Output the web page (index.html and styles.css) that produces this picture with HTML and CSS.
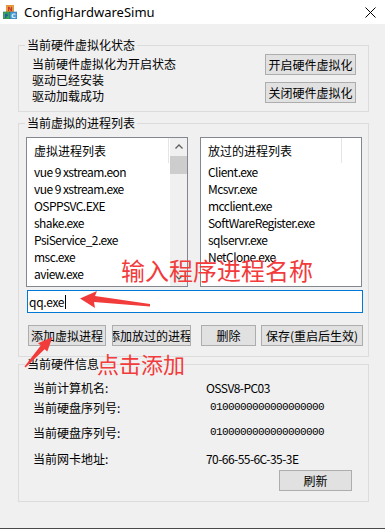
FILE: index.html
```html
<!DOCTYPE html>
<html lang="zh-CN">
<head>
<meta charset="utf-8">
<title>ConfigHardwareSimu</title>
<link rel="stylesheet" href="styles.css">
</head>
<body>
<div class="window">
  <div class="titlebar">
    <svg class="app-icon" viewBox="0 0 14 14" width="14" height="14">
      <rect x="3.5" y="0" width="7" height="7" fill="#f2a23a" stroke="#c77a1e" stroke-width="0.6"/>
      <text x="7" y="6" font-size="6" text-anchor="middle" fill="#c0282a" font-family="DejaVu Sans" font-weight="bold">N</text>
      <rect x="0" y="7" width="7" height="7" fill="#3fa65a" stroke="#2a7a40" stroke-width="0.6"/>
      <text x="3.5" y="13" font-size="6" text-anchor="middle" fill="#1d4fb0" font-family="DejaVu Sans" font-weight="bold">F</text>
      <rect x="7" y="7" width="7" height="7" fill="#4f9fd8" stroke="#2a6ea8" stroke-width="0.6"/>
      <text x="10.5" y="13" font-size="6" text-anchor="middle" fill="#e8f4ff" font-family="DejaVu Sans" font-weight="bold">C</text>
    </svg>
    <span class="title">ConfigHardwareSimu</span>
    <svg class="close" viewBox="0 0 11 11" width="11" height="11">
      <path d="M0.5 0.5 L10.5 10.5 M10.5 0.5 L0.5 10.5" stroke="#000" stroke-width="1"/>
    </svg>
  </div>

  <div class="group g1">
    <div class="gtitle">当前硬件虚拟化状态</div>
    <div class="status-row">
      <div class="status-text">
        <div class="line l1">当前硬件虚拟化为开启状态</div>
        <div class="line">驱动已经安装</div>
        <div class="line">驱动加载成功</div>
      </div>
      <div class="btn-col">
        <button class="btn btn-wide">开启硬件虚拟化</button>
        <button class="btn btn-wide">关闭硬件虚拟化</button>
      </div>
    </div>
  </div>

  <div class="group g2">
    <div class="gtitle">当前虚拟的进程列表</div>
    <div class="lists">
      <div class="list">
        <div class="list-main">
          <div class="list-head">虚拟进程列表</div>
          <div class="item">vue 9 xstream.eon</div>
          <div class="item">vue 9 xstream.exe</div>
          <div class="item">OSPPSVC.EXE</div>
          <div class="item">shake.exe</div>
          <div class="item">PsiService_2.exe</div>
          <div class="item">msc.exe</div>
          <div class="item">aview.exe</div>
        </div>
        <div class="scrollbar">
          <div class="sb-btn">
            <svg width="8" height="5" viewBox="0 0 8 5"><path d="M0.5 4.5 L4 1 L7.5 4.5" fill="none" stroke="#606060" stroke-width="1.3"/></svg>
          </div>
          <div class="sb-thumb"></div>
          <div class="sb-track"></div>
          <div class="sb-btn">
            <svg width="8" height="5" viewBox="0 0 8 5"><path d="M0.5 0.5 L4 4 L7.5 0.5" fill="none" stroke="#606060" stroke-width="1.3"/></svg>
          </div>
        </div>
      </div>
      <div class="list">
        <div class="list-main">
          <div class="list-head head-right">放过的进程列表</div>
          <div class="item">Client.exe</div>
          <div class="item">Mcsvr.exe</div>
          <div class="item">mcclient.exe</div>
          <div class="item">SoftWareRegister.exe</div>
          <div class="item">sqlservr.exe</div>
          <div class="item">NetClone.exe</div>
        </div>
      </div>
    </div>
    <div class="input"><span class="latin">qq.exe</span><span class="caret"></span></div>
    <div class="actions">
      <button class="btn b-add">添加虚拟进程</button>
      <button class="btn b-pass"><span class="clip">添加放过的进程</span></button>
      <button class="btn b-del">删除</button>
      <button class="btn b-save">保存(重启后生效)</button>
    </div>
  </div>

  <div class="group g3">
    <div class="gtitle">当前硬件信息</div>
    <div class="info">
      <div class="info-row r1"><span class="info-label">当前计算机名:</span><span class="val">OSSV8-PC03</span></div>
      <div class="info-row r2"><span class="info-label">当前硬盘序列号:</span><span class="val mono">0100000000000000000</span></div>
      <div class="info-row r3"><span class="info-label">当前硬盘序列号:</span><span class="val mono">0100000000000000000</span></div>
      <div class="info-row r4"><span class="info-label">当前网卡地址:</span><span class="val">70-66-55-6C-35-3E</span></div>
      <button class="btn refresh">刷新</button>
    </div>
  </div>

  <div class="taskbar"></div>

  <svg class="annot" viewBox="0 0 385 529" width="385" height="529">
    <polygon points="80,298.5 97,291 95,296 150,304 150,306.5 94,302 95,308" fill="#f23b3b"/>
    <polygon points="52.5,337 47.3,351.5 44.6,349.2 25.5,367.5 24.5,366.6 40.8,345.6 38,343.3" fill="#f23b3b"/>
  </svg>
  <div class="note note1">输入程序进程名称</div>
  <div class="note note2">点击添加</div>
</div>
</body>
</html>
```

FILE: styles.css
```css
* { box-sizing: border-box; }

body {
  margin: 0;
  background: #f0f0f0;
  font-family: "Noto Sans CJK SC", "Noto Sans", sans-serif;
  font-size: 12px;
  color: #000;
}

.window {
  position: relative;
  width: 385px;
  height: 529px;
  overflow: hidden;
  display: flex;
  flex-direction: column;
}

.titlebar {
  height: 24px;
  flex-shrink: 0;
  background: #fff;
  display: flex;
  align-items: center;
}

.app-icon {
  margin-left: 3px;
  margin-right: 7px;
}

.title {
  font-family: "Noto Sans", sans-serif;
  font-size: 13px;
  line-height: 16px;
}

.close {
  margin-left: auto;
  margin-right: 9px;
}

.group {
  border: 1px solid #dcdcdc;
  margin: 0 16px 0 18px;
  display: flex;
  flex-direction: column;
  flex-shrink: 0;
}

.g1 { margin-top: 21px; }
.g2 { margin-top: 11px; }
.g3 { margin-top: 7px; }

.gtitle {
  align-self: flex-start;
  margin: -8px 0 0 6px;
  padding: 0 2px;
  line-height: 14px;
  background: #f0f0f0;
  white-space: nowrap;
}

.status-row {
  display: flex;
  justify-content: space-between;
  padding: 2px 12px 7px 13px;
}

.status-text { padding-top: 1px; }

.line {
  height: 16px;
  line-height: 16px;
  white-space: nowrap;
}

.line.l1 { height: 17px; line-height: 17px; }

.btn-col {
  display: flex;
  flex-direction: column;
  gap: 7px;
}

.btn {
  height: 21px;
  margin: 0;
  padding: 0;
  background: #e1e1e1;
  border: 1px solid #adadad;
  border-radius: 0;
  font: inherit;
  color: #000;
  display: flex;
  align-items: center;
  justify-content: center;
  white-space: nowrap;
  overflow: hidden;
  flex-shrink: 0;
}

.btn-wide { width: 91px; }

.lists {
  display: flex;
  gap: 12px;
  padding: 7px 6px 0 7px;
}

.list {
  width: 162px;
  height: 150px;
  border: 1px solid #828790;
  background: #fff;
  display: flex;
  overflow: hidden;
}

.list-main {
  flex: 1;
  min-width: 0;
}

.list-head {
  width: 142px;
  height: 25px;
  line-height: 25px;
  padding-left: 7px;
  border-right: 1px solid #e5e5e5;
  white-space: nowrap;
}

.list-head.head-right { width: 141px; }

.item {
  height: 17px;
  line-height: 17px;
  padding-left: 7px;
  white-space: nowrap;
  letter-spacing: -0.55px;
}

.latin { letter-spacing: -0.3px; }

.scrollbar {
  width: 17px;
  background: #f0f0f0;
  display: flex;
  flex-direction: column;
}

.sb-btn {
  height: 17px;
  display: flex;
  align-items: center;
  justify-content: center;
}

.sb-thumb {
  height: 18px;
  margin: 1px 0 0 0;
  background: #cdcdcd;
}

.sb-track { flex: 1; }

.input {
  margin: 3px 5px 0 8px;
  height: 23px;
  border: 1px solid #0078d7;
  background: #fff;
  padding-left: 1px;
  display: flex;
  align-items: center;
}

.caret {
  width: 1px;
  height: 14px;
  margin-left: 1px;
  background: #000;
}

.actions {
  display: flex;
  padding: 12px 0 10px 9px;
}

.b-add { width: 78px; }
.b-pass { width: 79px; margin-left: 6px; justify-content: flex-start; }
.b-del { width: 55px; margin-left: 10px; }
.b-save { width: 102px; margin-left: 5px; }

.clip { margin-left: -5px; }

.info {
  display: flex;
  flex-direction: column;
  padding: 0 0 10px 14px;
}

.info-row {
  display: flex;
  height: 17px;
  line-height: 17px;
  white-space: nowrap;
}

.r1 { margin-top: 8px; }
.r2 { margin-top: 3px; }
.r3 { margin-top: 8px; }
.r4 { margin-top: 9px; }

.info-label { width: 173px; }

.val { letter-spacing: -0.55px; }

.mono {
  font-family: "Liberation Mono", monospace;
  font-size: 11px;
  letter-spacing: -0.6px;
  margin-left: 4px;
}

.refresh {
  width: 73px;
  align-self: flex-end;
  margin: 3px 16px 0 0;
}

.taskbar {
  margin-top: auto;
  height: 1px;
  background: #4a4a4a;
  flex-shrink: 0;
}

.annot {
  position: absolute;
  left: 0;
  top: 0;
  pointer-events: none;
}

.note {
  position: absolute;
  color: #f23b3b;
  white-space: nowrap;
  pointer-events: none;
}

.note1 {
  left: 121px;
  top: 257px;
  font-size: 24px;
  line-height: 26px;
}

.note2 {
  left: 97px;
  top: 351px;
  font-size: 22px;
  line-height: 24px;
}
```
